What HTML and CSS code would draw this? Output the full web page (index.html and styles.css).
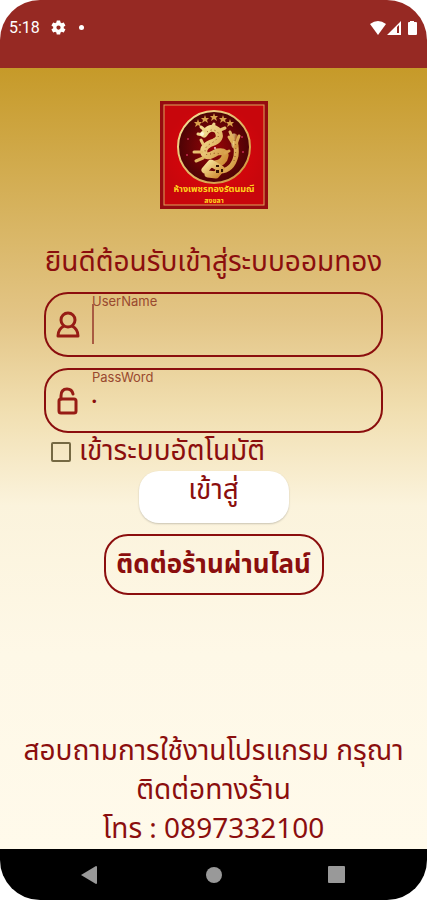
FILE: index.html
```html
<!DOCTYPE html>
<html lang="th">
  <head>
    <meta charset="UTF-8" />
    <meta name="viewport" content="width=device-width, initial-scale=1.0" />
    <title>เข้าสู่ระบบออมทอง</title>
    <link rel="stylesheet" href="styles.css">
  </head>
  <body>
    <div class="phone">
      <header class="status-bar">
        <span class="clock">5:18</span>
        <svg class="gear" viewBox="0 0 24 24" width="17" height="17">
          <path fill="#fff" fill-rule="evenodd" d="M19.4 13a7.500 7.500 0 0 0 0-2l2.100-1.600a.5.5 0 0 0 .1-.6l-2-3.500a.5.5 0 0 0-.6-.2l-2.500 1a7.300 7.300 0 0 0-1.700-1l-.4-2.700a.5.5 0 0 0-.5-.4h-4a.5.5 0 0 0-.5.4L9 5.100a7.700 7.700 0 0 0-1.700 1l-2.500-1a.5.5 0 0 0-.6.200l-2 3.500a.5.5 0 0 0 .1.600L4.500 11a7.900 7.900 0 0 0 0 2l-2.200 1.600a.5.5 0 0 0-.1.600l2 3.500c.1.200.4.300.6.200l2.500-1c.5.400 1.100.8 1.700 1l.4 2.700c0 .2.200.4.500.4h4c.2 0 .5-.2.500-.4l.4-2.700a7.300 7.300 0 0 0 1.700-1l2.500 1c.2.100.5 0 .6-.2l2-3.500a.5.5 0 0 0-.1-.6zM12 15a3 3 0 1 1 0-6 3 3 0 0 1 0 6z" />
        </svg>
        <span class="dot"></span>
        <svg class="signal" viewBox="0 0 50 16" width="50" height="16">
          <path fill="#fff" d="M1 4Q9-2 17 4L9 15z" />
          <path fill="#fff" fill-rule="evenodd" d="M18 15L32 1V15zM28 7V13H30V5z" />
          <path fill="#fff" d="M41 1h4v1h2q1 0 1 1v11q0 1-1 1h-7q-1 0-1-1V3q0-1 1-1h1z" />
        </svg>
      </header>

      <main>
        <svg class="logo" viewBox="0 0 108 108" width="108" height="108">
          <defs>
            <radialGradient id="red">
              <stop offset="0" stop-color="#e3060b" />
              <stop offset="1" stop-color="#c8060c" />
            </radialGradient>
            <radialGradient id="disc">
              <stop offset="0" stop-color="#990408" />
              <stop offset="1" stop-color="#4c0305" />
            </radialGradient>
            <linearGradient id="gold" x2="1" y2="1">
              <stop offset="0" stop-color="#f6e49a" />
              <stop offset="1" stop-color="#cf8d35" />
            </linearGradient>
          </defs>
          <rect width="108" height="108" fill="#960b10" />
          <rect x="4" y="4" width="100" height="100" fill="url(#red)" stroke="#dca35a" />
          <circle cx="54" cy="46" r="36" fill="url(#disc)" stroke="url(#gold)" stroke-width="2" />
          <g fill="#d9a04c">
            <path id="star" d="M54 12l1 3h3l-2 2 1 3-3-2-3 2 1-3-2-2h3z" />
            <use href="#star" x="-9" y="2" />
            <use href="#star" x="9" y="2" />
            <use href="#star" x="-16" y="6" />
            <use href="#star" x="16" y="6" />
          </g>
          <!-- dragon -->
          <g fill="none" stroke="url(#gold)" stroke-linecap="round" stroke-linejoin="round">
            <path stroke-width="7" d="M44 33Q50 24 57 29Q63 37 54 41Q42 45 44 52Q46 58 57 51Q68 49 64 58Q60 64 51 63" />
            <path stroke-width="5" d="M58 70Q72 71 76 55Q77 47 75 42" />
            <path stroke-width="7" d="M75 44L74 36" stroke-opacity=".7" />
            <path stroke-width="3" d="M46 30L41 26M52 27L54 23M58 30L65 27M43 34L38 33M41 39L43 43M42 51L34 51M43 57L36 60M65 52L69 50M73 38L70 31M76 43L79 35M72 41L69 36" />
            <path stroke-width="7" d="M45 69L51 62L61 68L56 74L48 73" />
          </g>
          <path fill="none" stroke="#8b4a18" stroke-dasharray="1 3" d="M47 31Q54 26 59 33Q58 39 50 43Q42 48 47 54Q62 49 62 58M74 60Q77 49 75 39" />
          <path fill="#351305" d="M56 64h3v2h-3zM61 68h2v3h-2zM56 69h3v3h-3z" />
          <circle cx="42" cy="33" r="2" fill="#fff6d8" />
          <circle cx="55" cy="47" r="1" fill="#ffccd2" />
          <g fill="#c62b52">
            <circle cx="28" cy="38" r="1" /><circle cx="27" cy="54" r="1" />
            <circle cx="82" cy="36" r="1" /><circle cx="83" cy="51" r="1" />
          </g>
          <text class="logo-name" x="54" y="91" text-anchor="middle">ห้างเพชรทองรัตนมณี</text>
          <text class="logo-place" x="54" y="102" text-anchor="middle">สงขลา</text>
        </svg>

        <h1>ยินดีต้อนรับเข้าสู่ระบบออมทอง</h1>

        <form>
          <div class="field">
            <svg viewBox="0 0 24 28" width="24" height="28">
              <g fill="none" stroke="#971c15" stroke-width="3" stroke-linejoin="round">
                <circle cx="12" cy="9" r="7" />
                <path d="M8 15Q2 18 2 25H22Q22 18 16 15" />
              </g>
            </svg>
            <div class="entry">
              <label for="username">UserName</label>
              <input type="text" id="username" />
              <span class="caret"></span>
            </div>
          </div>
          <div class="field">
            <svg viewBox="0 0 24 28" width="24" height="28">
              <g fill="none" stroke="#971c15" stroke-width="3" stroke-linecap="round">
                <rect x="3" y="12" width="17" height="14" rx="2" />
                <path d="M5 12V9Q5 2 11 2Q16 2 17 7" />
              </g>
            </svg>
            <div class="entry">
              <label for="password">PassWord</label>
              <input type="password" id="password" value="1" />
            </div>
          </div>
          <div class="remember">
            <input type="checkbox" id="auto" />
            <label for="auto">เข้าระบบอัตโนมัติ</label>
          </div>
          <button type="submit" class="login">เข้าสู่</button>
          <button type="button" class="line">ติดต่อร้านผ่านไลน์</button>
        </form>

        <p class="contact">
          สอบถามการใช้งานโปรแกรม กรุณา<br />ติดต่อทางร้าน<br />โทร : 0897332100
        </p>
      </main>

      <nav class="nav-bar">
        <button aria-label="Back">
          <svg viewBox="0 0 20 20" width="20" height="20"><path fill="#999" d="M1 10L16 1Q17 1 17 2V18Q17 19 16 19z" /></svg>
        </button>
        <button aria-label="Home">
          <svg viewBox="0 0 20 20" width="20" height="20"><circle cx="10" cy="10" r="8" fill="#999" /></svg>
        </button>
        <button aria-label="Recent apps">
          <svg viewBox="0 0 20 20" width="20" height="20"><rect x="1" y="1" width="17" height="17" rx="1" fill="#999" /></svg>
        </button>
      </nav>
    </div>
  </body>
</html>
```

FILE: styles.css
```css
* {
  box-sizing: border-box;
}
body {
  margin: 0;
  background: #fff;
  color: #8b0e0e;
  font-family: "Noto Sans Thai", "Noto Sans", sans-serif;
}
.phone {
  display: flex;
  flex-direction: column;
  min-height: 100vh;
  border-radius: 40px;
  overflow: hidden;
}
.status-bar {
  display: flex;
  align-items: center;
  height: 68px;
  padding: 0 8px 13px 9px;
  background: #962923;
  color: #fff;
}
.clock {
  font: 16px Roboto, sans-serif;
}
.gear {
  margin-left: 10px;
}
.dot {
  width: 5px;
  height: 5px;
  margin-left: 12px;
  border-radius: 50%;
  background: #fff;
}
.signal {
  margin-left: auto;
}
main {
  flex: 1;
  display: flex;
  flex-direction: column;
  align-items: center;
  padding: 33px 16px 0;
  background: linear-gradient(#c69a29, #e3c586 32%, #f1dfb1 44%, #fbf3dc 56%, #fef8e7 75%, #fffaeb);
}
.logo-name {
  font-size: 9px;
  font-weight: bold;
  fill: #ffd21c;
}
.logo-place {
  font-size: 7px;
  font-weight: bold;
  fill: #ffd21c;
}
h1 {
  margin: 34px 0 9px;
  font-size: 28px;
  font-weight: normal;
  line-height: 40px;
  white-space: nowrap;
}
form {
  display: flex;
  flex-direction: column;
  align-items: center;
  width: 100%;
  padding: 0 28px;
}
.field {
  display: flex;
  align-items: center;
  width: 100%;
  height: 65px;
  margin-bottom: 11px;
  padding-left: 10px;
  border: 2px solid #8b0e0e;
  border-radius: 24px;
}
.entry {
  position: relative;
  display: flex;
  flex-direction: column;
  flex: 1;
  height: 100%;
  margin: 0 20px 0 12px;
}
.entry label {
  font: 13px/14px Inter, sans-serif;
  color: #99492f;
}
.entry input {
  width: 100%;
  height: 34px;
  padding: 0;
  border: 0;
  outline: 0;
  background: none;
  color: #8b0e0e;
  font-size: 13px;
}
.caret {
  position: absolute;
  top: 10px;
  left: 0;
  width: 2px;
  height: 40px;
  background: #a95b42;
}
.remember {
  display: flex;
  align-items: center;
  align-self: flex-start;
  gap: 8px;
  height: 40px;
  margin: -12px 0 -1px 7px;
  font-size: 28px;
  line-height: 40px;
  white-space: nowrap;
}
.remember input {
  appearance: none;
  width: 20px;
  height: 20px;
  margin: 0;
  border: 2px solid #756943;
  border-radius: 2px;
}
.login {
  width: 150px;
  height: 52px;
  padding: 0 0 12px;
  border: 0;
  border-radius: 20px;
  background: #fff;
  box-shadow: 0 1px 2px rgba(0, 0, 0, 0.2);
  color: #8b0e0e;
  font: 28px/40px "Noto Sans Thai", "Noto Sans", sans-serif;
}
.line {
  width: 220px;
  height: 61px;
  margin-top: 11px;
  padding: 0;
  border: 2px solid #8b0e0e;
  border-radius: 24px;
  background: none;
  color: #8b0e0e;
  font: bold 26px/40px "Noto Sans Thai", "Noto Sans", sans-serif;
  white-space: nowrap;
}
.contact {
  margin: auto 0 0;
  font-size: 28px;
  line-height: 39px;
  text-align: center;
  white-space: nowrap;
}
.nav-bar {
  display: flex;
  justify-content: space-between;
  align-items: center;
  height: 51px;
  padding: 0 80px;
  background: #000;
}
.nav-bar button {
  display: flex;
  padding: 0;
  border: 0;
  background: none;
}
```
